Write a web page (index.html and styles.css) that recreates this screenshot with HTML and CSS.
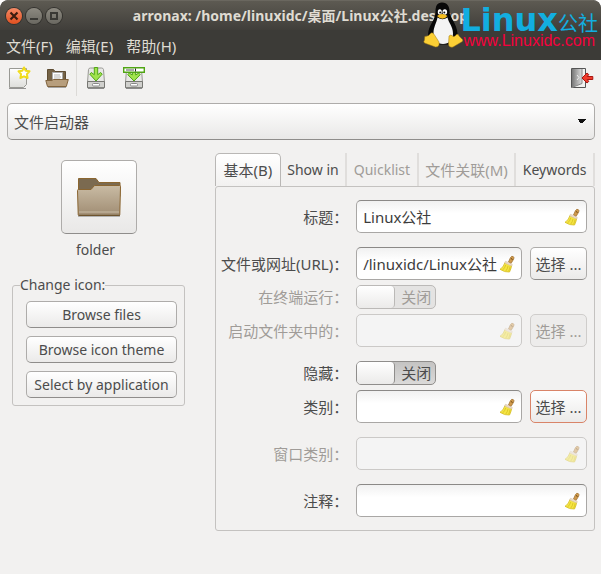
FILE: index.html
```
<!DOCTYPE html>
<html lang="zh-CN">
<head>
  <meta charset="UTF-8">
  <title>arronax</title>
  <link rel="stylesheet" href="styles.css">
</head>
<body>

<svg class="defs" width="0" height="0" aria-hidden="true">
  <defs>
    <linearGradient id="paper" x1="0" y1="0" x2="0" y2="1">
      <stop offset="0" stop-color="#ffffff"/><stop offset="1" stop-color="#dededb"/>
    </linearGradient>
    <linearGradient id="front" x1="0" y1="0" x2="0" y2="1">
      <stop offset="0" stop-color="#c9bba4"/><stop offset="1" stop-color="#a08d73"/>
    </linearGradient>
    <linearGradient id="steel" x1="0" y1="0" x2="1" y2="0">
      <stop offset="0" stop-color="#777"/><stop offset="1" stop-color="#ddd"/>
    </linearGradient>
    <symbol id="broom" viewBox="0 0 16 18">
      <path d="M9.500 7 11.500 2.500Q12.600.8 14.200 1.500q1.300.9.500 2.600L12 8.500z" fill="#d09a4c" stroke="#9a6a2a" stroke-width=".7"/>
      <path d="m12 3.500 1.600 1" stroke="#6b4614"/>
      <path d="M6 7.500Q4.500 12.500 1 14.300q4.500 3.200 9.500 2.700Q12 14 12.700 10.500z" fill="#f5e542" stroke="#d3bb1c" stroke-width=".8"/>
      <path d="M6.800 10q-1 3-3 4.800M9 11q-.5 3-2.200 5M11 11.500q-.2 2.500-1.300 4.500" fill="none" stroke="#cdb31a" stroke-width=".6"/>
      <path d="m6.500 6.200 6.800 3.200-.7 1.700L5.700 8z" fill="#ecdcc8" stroke="#d0bba0" stroke-width=".5"/>
    </symbol>
    <symbol id="drive" viewBox="0 0 24 24">
      <path d="M4.500 3.500q.3-1.500 2-1.500h11q1.700 0 2 1.500l1 13v5h-17v-5z" fill="#e8e8e6" stroke="#999994"/>
      <path d="M3.500 15.500h17v6.200h-17z" fill="#d0d0cd" stroke="#777773"/>
      <rect x="8.500" y="17.500" width="7" height="2.500" rx="1" fill="#fff" stroke="#888"/>
      <path d="M4 22.500h16" stroke="#555" stroke-opacity=".6"/>
    </symbol>
  </defs>
</svg>

<header class="window-top">
  <div class="titlebar">
    <div class="window-buttons">
      <button class="win-btn close" aria-label="关闭窗口"><svg width="16" height="16" viewBox="0 0 16 16"><path d="m4.500 4.500 7 7m0-7-7 7" stroke="#3c1d10" stroke-width="2.200"/></svg></button>
      <button class="win-btn" aria-label="最小化"><svg width="16" height="16" viewBox="0 0 16 16"><path d="M4 11h8" stroke="#3a3935" stroke-width="2"/></svg></button>
      <button class="win-btn" aria-label="最大化"><svg width="16" height="16" viewBox="0 0 16 16"><path d="M5 5h6v6H5z" fill="none" stroke="#3a3935" stroke-width="2"/></svg></button>
    </div>
    <h1>arronax: /home/linuxidc/桌面/Linux公社.desktop</h1>
  </div>
  <nav class="menubar">
    <button>文件(F)</button>
    <button>编辑(E)</button>
    <button>帮助(H)</button>
  </nav>
  <div class="watermark">
    <svg width="40" height="46" viewBox="0 0 40 46">
      <path d="M19 .5c5.500 0 7.500 4 7.500 9 0 6 7.500 12 8 22 .2 6-3 10-7 11H13C7 41 4 36 5.500 29 7 22 12.500 17 12.500 10 12.500 4 14 .5 19 .5z" fill="#080808"/>
      <path d="M14.500 15.500q5 3.500 10 0c1 5 5.500 9 5.500 16 0 7-4 10.500-10 10.500S10.500 38 10.500 31c0-6 3-10 4-15.500z" fill="#f4f4f4"/>
      <ellipse cx="16.800" cy="10" rx="2" ry="2.800" fill="#fff"/><ellipse cx="21.800" cy="10" rx="2.300" ry="2.800" fill="#fff"/>
      <circle cx="17.200" cy="10.500" r="1" fill="#111"/><circle cx="21.300" cy="10.500" r="1" fill="#111"/>
      <path d="M14 14q5-4 10.500 0-5 5.500-10.500 0z" fill="#f6be20"/>
      <path d="M8 31q2-1 3.500 2l4.500 7q1 5-3.500 5L1.500 41q-1.500-1 0-3l.3-3.500q4 0 6.200-3.500z" fill="#fbcf35" stroke="#9c7612" stroke-width=".5"/>
      <path d="M26 34q2-2 3.500 0 2 1.500 4-1.500 2-1 2.500 1.500l3.500 3.500q1 1.500-1 2.500L30 45q-4 1-4.500-3z" fill="#fbcf35" stroke="#9c7612" stroke-width=".5"/>
    </svg>
    <div class="watermark-text">
      <div class="brand"><b>Linux</b><span>公社</span></div>
      <div class="site">www.Linuxidc.com</div>
    </div>
  </div>
</header>

<div class="toolbar">
  <button aria-label="新建">
    <svg width="24" height="24" viewBox="0 0 24 24">
      <path d="M2.500 2.500h17v16l-3 3h-14z" fill="url(#paper)" stroke="#999994"/>
      <path d="M2 22.500h17" stroke="#555" stroke-opacity=".6"/>
      <path d="m17 1.500 1.700 3.200 3.800.6-2.600 2.800.7 3.900L17 10.300 13.400 12l.7-3.900-2.600-2.800 3.800-.6z" fill="#fff" stroke="#f0dc1c" stroke-width="2" stroke-linejoin="round"/>
    </svg>
  </button>
  <button aria-label="打开">
    <svg width="24" height="24" viewBox="0 0 24 24">
      <path d="M2.500 15.500v-12h6l1.500 2h10.500v10z" fill="#756347" stroke="#5f4d33"/>
      <path d="M7.500 6.500h10v10h-10z" fill="#fff" stroke="#aaa"/>
      <path d="M9 9h6M9 11h7M9 13h6" stroke="#b3b3b0"/>
      <path d="M.8 14.500h6l1.500-1h15l-2 7H2.500z" fill="#b79e7d" stroke="#80633d"/>
      <path d="M3 21.500h18" stroke="#555" stroke-opacity=".5"/>
    </svg>
  </button>
  <span class="tool-sep"></span>
  <button aria-label="保存">
    <svg width="24" height="24" viewBox="0 0 24 24">
      <use href="#drive"/>
      <path d="M10.300 1.500h3.400v7.200l3-2.200 1.500 1.700L12 15 5.800 8.200l1.500-1.700 3 2.200z" fill="#a0e34d" stroke="#50a514" stroke-linejoin="round"/>
    </svg>
  </button>
  <button aria-label="另存为">
    <svg width="24" height="24" viewBox="0 0 24 24">
      <use href="#drive"/>
      <path d="M10.300 4h3.400v5l3-2 1.500 1.700L12 15 5.800 8.700 7.300 7l3 2z" fill="#a0e34d" stroke="#50a514" stroke-linejoin="round"/>
      <path d="M1.700 1.700h20.600v4.600H1.700z" fill="#fff" stroke="#50a514" stroke-width="1.400"/>
      <path d="M4 4h8" stroke="#aaa" stroke-width="2"/><path d="M13.500 2.500v3" stroke="#222"/>
    </svg>
  </button>
  <button class="quit" aria-label="退出">
    <svg width="24" height="24" viewBox="0 0 24 24">
      <path d="M1.500 2.500h14v19h-14z" fill="#f2f2f0" stroke="#555"/>
      <path d="M2 3h10v14.500L2 21.500z" fill="url(#steel)"/>
      <path d="M12 3v14.500l-10 4" fill="none" stroke="#888"/>
      <path d="m7 9 2 2.500L7 14" fill="none" stroke="#eee"/>
      <path d="m12 12 5-5 1.800 1.600-1.600 1.900h5.600v3h-5.600l1.600 1.900L17 17z" fill="#ef3b2b" stroke="#a91510" stroke-linejoin="round"/>
    </svg>
  </button>
</div>

<main>
  <select class="kind" aria-label="类型">
    <option>文件启动器</option>
  </select>

  <div class="columns">
    <section class="icon-side">
      <button class="icon-button" aria-label="图标">
        <svg width="46" height="42" viewBox="0 0 46 42">
          <path d="M2 40.500h42" stroke="#777" stroke-opacity=".5"/>
          <path d="M2.500 20v-17.500h17.500l3 4h21v14z" fill="#7b6a50" stroke="#8b6630"/>
          <path d="M1.500 14.500q0-1 1-1h12.500l3.500-4h25q1 0 1 1l-.7 28q0 1-1 1H3.200q-1 0-1-1z" fill="url(#front)" stroke="#8a6531"/>
          <path d="M3 36h40" stroke="#c9bca7"/>
          <path d="M2.500 39.300h41.500" stroke="#67502f"/>
        </svg>
      </button>
      <p class="icon-name">folder</p>
      <fieldset>
        <legend>Change icon:</legend>
        <button class="btn">Browse files</button>
        <button class="btn">Browse icon theme</button>
        <button class="btn">Select by application</button>
      </fieldset>
    </section>

    <section class="notebook">
      <div class="tabs" role="tablist">
        <button class="tab active" role="tab" aria-selected="true">基本(B)</button>
        <button class="tab latin" role="tab">Show in</button>
        <button class="tab latin" role="tab" disabled>Quicklist</button>
        <button class="tab" role="tab" disabled>文件关联(M)</button>
        <button class="tab latin" role="tab">Keywords</button>
      </div>
      <form class="panel">
        <label for="title">标题：</label>
        <div class="entry wide">
          <input type="text" id="title" value="Linux公社">
          <button type="button" aria-label="清除"><svg width="16" height="18"><use href="#broom"/></svg></button>
        </div>

        <label class="group" for="url">文件或网址(URL)：</label>
        <div class="entry group">
          <input type="text" id="url" value="/linuxidc/Linux公社">
          <button type="button" aria-label="清除"><svg width="16" height="18"><use href="#broom"/></svg></button>
        </div>
        <button type="button" class="btn group">选择 ...</button>

        <label class="off" for="terminal">在终端运行：</label>
        <div class="switch off"><input type="checkbox" id="terminal" disabled><span>关闭</span></div>

        <label class="off" for="start">启动文件夹中的：</label>
        <div class="entry off">
          <input type="text" id="start" disabled>
          <button type="button" aria-label="清除" disabled><svg width="16" height="18"><use href="#broom"/></svg></button>
        </div>
        <button type="button" class="btn" disabled>选择 ...</button>

        <label class="group" for="hidden">隐藏：</label>
        <div class="switch group"><input type="checkbox" id="hidden"><span>关闭</span></div>

        <label for="category">类别：</label>
        <div class="entry">
          <input type="text" id="category">
          <button type="button" aria-label="清除"><svg width="16" height="18"><use href="#broom"/></svg></button>
        </div>
        <button type="button" class="btn focus">选择 ...</button>

        <label class="off group" for="wmclass">窗口类别：</label>
        <div class="entry wide off group">
          <input type="text" id="wmclass" disabled>
          <button type="button" aria-label="清除" disabled><svg width="16" height="18"><use href="#broom"/></svg></button>
        </div>

        <label class="group" for="comment">注释：</label>
        <div class="entry wide group">
          <input type="text" id="comment">
          <button type="button" aria-label="清除"><svg width="16" height="18"><use href="#broom"/></svg></button>
        </div>
      </form>
    </section>
  </div>
</main>

</body>
</html>
```
FILE: styles.css
```
* {
  box-sizing: border-box;
}
html {
  background: #fff;
}
body {
  margin: 0;
  min-height: 100vh;
  background: #f2f1f0;
  border-radius: 8px 8px 0 0;
  color: #4c4c4c;
  font: 15px/20px "Noto Sans", "Noto Sans CJK SC", sans-serif;
}
button, input, select {
  font: inherit;
  color: inherit;
  margin: 0;
  padding: 0;
}
button {
  border: none;
  background: none;
}
.defs {
  position: absolute;
}

/* title and menu */
.window-top {
  position: relative;
  background: #3c3b37;
  color: #dfdbd2;
  border-radius: 8px 8px 0 0;
}
.titlebar {
  display: flex;
  align-items: center;
  height: 30px;
  padding: 0 6px;
  background: linear-gradient(#5d5a52, #403e3a);
  border-top: 1px solid #6a675f;
  border-radius: 8px 8px 0 0;
}
.window-buttons {
  display: flex;
  flex: 1;
  gap: 4px;
}
.titlebar::after {
  content: "";
  flex: 1;
}
.win-btn {
  display: flex;
  width: 16px;
  height: 16px;
  border-radius: 50%;
  background: linear-gradient(#8d8a81, #6a6861);
  box-shadow: 0 0 0 1px #33322e;
}
.close {
  background: linear-gradient(#f58a66, #e2501f);
}
h1 {
  margin: 0;
  font-size: 14px;
  line-height: 20px;
  white-space: nowrap;
}
.menubar {
  display: flex;
  gap: 13px;
  height: 30px;
  padding: 2px 6px 0;
}
.watermark {
  position: absolute;
  top: 2px;
  right: 3px;
  display: flex;
}
.watermark-text {
  margin-left: -3px;
}
.brand {
  display: flex;
  height: 31px;
  color: #12aee0;
}
.brand b {
  font: bold 32px/36px "DejaVu Sans", sans-serif;
}
.brand span {
  font-size: 20px;
  line-height: 44px;
}
.site {
  padding-left: 3px;
  color: #f5003d;
  font: 16px/16px "Liberation Sans", sans-serif;
}

/* toolbar */
.toolbar {
  display: flex;
  height: 36px;
}
.toolbar button {
  display: flex;
  align-items: center;
  justify-content: center;
  width: 38px;
}
.tool-sep {
  width: 1px;
  background: #dcdad7;
}
.toolbar .quit {
  margin-left: auto;
}

main {
  padding: 7px 6px 40px 7px;
}
.kind {
  display: block;
  width: 100%;
  height: 37px;
  padding: 0 6px;
  appearance: none;
  border: 1px solid #aeacaa;
  border-bottom-color: #8f8d8b;
  border-radius: 5px;
  background:
    linear-gradient(to bottom left, #111 50%, transparent 50%) right 12px center / 5px 5px no-repeat,
    linear-gradient(to bottom right, #111 50%, transparent 50%) right 7px center / 5px 5px no-repeat,
    linear-gradient(#fff, #e9e8e7);
}
.columns {
  display: flex;
  gap: 30px;
  padding: 13px 0 0 5px;
}

/* left column */
.icon-side {
  display: flex;
  flex-direction: column;
  align-items: center;
  width: 173px;
  padding-top: 7px;
  font-size: 14px;
}
.icon-button {
  display: flex;
  align-items: center;
  justify-content: center;
  width: 76px;
  height: 74px;
  border: 1px solid #aeacaa;
  border-bottom-color: #8f8d8b;
  border-radius: 5px;
  background: linear-gradient(#fff, #e9e8e7);
}
.icon-name {
  margin: 6px 0 0;
  padding-right: 6px;
}
fieldset {
  display: flex;
  flex-direction: column;
  gap: 8px;
  width: 100%;
  margin: 15px 0 0;
  padding: 6px 7px 7px 13px;
  border: 1px solid #c4c2c0;
  border-radius: 3px;
}
legend {
  margin-left: -6px;
  padding: 0;
}
.btn {
  height: 27px;
  border: 1px solid #aeacaa;
  border-bottom-color: #8f8d8b;
  border-radius: 5px;
  background: linear-gradient(#fff, #ebeae9);
  white-space: nowrap;
}

/* tabs */
.notebook {
  flex: 1;
  min-width: 0;
}
.tabs {
  display: flex;
  height: 33px;
}
.tab {
  flex: auto;
  padding: 0 6px;
  border-right: 2px solid #e0dedc;
  white-space: nowrap;
}
.tab.active {
  padding: 0 7px;
  border: 1px solid #b9b7b5;
  border-bottom: none;
  border-radius: 5px 5px 0 0;
  background: linear-gradient(#fff, #f2f1f0);
}
.latin {
  font-size: 14px;
}
.tab:disabled, .btn:disabled {
  color: #a09c98;
}
.panel {
  display: grid;
  grid-template-columns: auto 1fr 57px;
  gap: 5px 8px;
  padding: 13px 7px 13px 5px;
  border: 1px solid #c4c2c0;
  border-radius: 3px;
}
.panel label {
  grid-column: 1;
  align-self: center;
  text-align: right;
  white-space: nowrap;
}
.panel .btn {
  height: 33px;
}
.panel .btn:disabled {
  border-color: #cfcdcb;
  background: #edeceb;
}
.panel .focus {
  border-color: #d98468;
}
.panel .group {
  margin-top: 9px;
}
.entry {
  display: flex;
  align-items: center;
  height: 33px;
  min-width: 0;
  padding: 0 6px;
  border: 1px solid #a9a7a5;
  border-top-color: #8b8987;
  border-radius: 5px;
  background: linear-gradient(#f1f1f1, #fff 40%);
  color: #3c3c3c;
}
.wide {
  grid-column: 2 / 4;
}
.entry input {
  flex: 1;
  min-width: 0;
  border: none;
  outline: none;
  background: none;
}
.entry button {
  display: flex;
}
.entry.off {
  border-color: #cbc9c7;
  background: #f4f4f4;
}
.entry.off svg {
  opacity: .45;
}
label.off {
  color: #a09c98;
}
.switch {
  grid-column: 2 / 4;
  display: flex;
  align-items: center;
  width: 80px;
  height: 24px;
  border: 1px solid #8f8d8b;
  border-radius: 5px;
  background: linear-gradient(#c4c3c2, #dbdad9);
}
.switch input {
  appearance: none;
  width: 38px;
  height: 22px;
  border-right: 1px solid #8f8d8b;
  border-radius: 4px;
  background: linear-gradient(#fff, #ebeae9);
}
.switch span {
  margin-left: 6px;
}
.switch.off {
  border-color: #bbb9b7;
  background: #e4e3e2;
  color: #a09c98;
}
.switch.off input {
  border-color: #bbb9b7;
}
```
